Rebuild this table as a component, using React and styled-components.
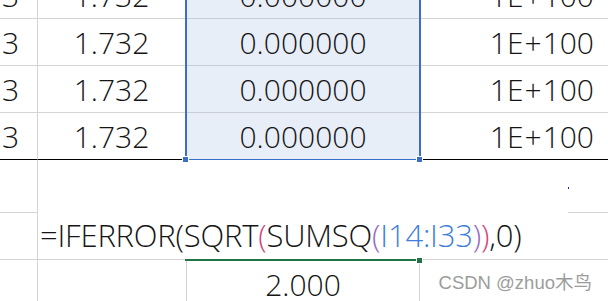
import React from 'react'
import styled, { createGlobalStyle } from 'styled-components'

const GRID = '#d4d4d4'
const SEL_GRID = '#c8ccd4'
const SEL_BLUE = '#3b6fc7'
const SEL_FILL = '#e8eef8'
const EXCEL_GREEN = '#217346'
const INK = '#151515'

const GlobalStyle = createGlobalStyle`
  html, body {
    margin: 0;
    padding: 0;
    background: #fff;
  }
  body {
    font-family: 'Open Sans', 'Noto Sans', sans-serif;
    font-weight: 300;
  }
`

const Sheet = styled.div`
  position: relative;
  width: 608px;
  height: 301px;
  overflow: hidden;
  background: #fff;
  color: ${INK};
`

const DataBlock = styled.div`
  display: grid;
  grid-template-columns: 38px 147px 236px 1fr;
  grid-template-rows: 19px 47px 47px 47px;
`

const justify = { left: 'flex-start', center: 'center', right: 'flex-end' }

const Cell = styled.div`
  box-sizing: border-box;
  display: flex;
  align-items: flex-end;
  justify-content: ${p => justify[p.$align || 'center']};
  overflow: hidden;
  padding: 0 ${p => p.$padRight || 0}px 7px ${p => p.$padLeft || 0}px;
  font-size: 30px;
  line-height: 30px;
  white-space: nowrap;
  border-bottom: 1px solid ${p => (p.$closing ? '#000' : GRID)};
  border-right: ${p => (p.$ruled ? `1px solid ${GRID}` : 'none')};
`

const Selection = styled.div`
  grid-column: 3;
  grid-row: 1 / span 4;
  position: relative;
  display: grid;
  grid-template-rows: 19px 47px 47px 46px;
  background: ${SEL_FILL};
  border-left: 2px solid ${SEL_BLUE};
  border-right: 2px solid ${SEL_BLUE};
  border-bottom: 1px solid ${SEL_BLUE};
`

const SelCell = styled(Cell)`
  border-bottom: ${p => (p.$closing ? 'none' : `1px solid ${SEL_GRID}`)};
`

const Handle = styled.span`
  position: absolute;
  bottom: -3px;
  ${p => (p.$side === 'left' ? 'left: -4px;' : 'right: -3px;')}
  width: 5px;
  height: 5px;
  background: ${SEL_BLUE};
  box-shadow: 0 0 0 1px #fff;
`

const LowerBlock = styled.div`
  display: grid;
  grid-template-columns: 38px 149px 233px 148px 1fr;
  grid-template-rows: 53px 47px 47px;
`

const GridCell = styled.div`
  box-sizing: border-box;
  border-right: ${p => (p.$right ? `1px solid ${GRID}` : 'none')};
  border-bottom: ${p => (p.$bottom ? `1px solid ${GRID}` : 'none')};
  grid-column: ${p => (p.$span ? `span ${p.$span}` : 'auto')};
`

const Speck = styled.span`
  display: block;
  width: 1px;
  height: 2px;
  margin-top: 27px;
  background: #1b2c86;
`

const FormulaCell = styled(GridCell)`
  display: flex;
  align-items: flex-end;
  padding: 0 0 8px 2px;
  font-size: 31px;
  line-height: 31px;
  letter-spacing: -0.2px;
  white-space: nowrap;
`

const Tok = styled.span`
  color: ${p => p.$tone || INK};
`

const ActiveCell = styled(GridCell)`
  position: relative;
  display: flex;
  align-items: flex-end;
  justify-content: center;
  padding-bottom: 7px;
  font-size: 30px;
  line-height: 30px;

  &::before {
    content: '';
    position: absolute;
    top: -1px;
    left: -2px;
    right: 2px;
    height: 2px;
    background: ${EXCEL_GREEN};
  }

  &::after {
    content: '';
    position: absolute;
    top: -2px;
    right: -3px;
    width: 5px;
    height: 5px;
    background: ${EXCEL_GREEN};
    box-shadow: 0 0 0 1px #fff;
  }
`

const Plus = styled.span`
  margin: 0 1px;
`

const Watermark = styled.div`
  position: absolute;
  right: 16px;
  bottom: 9px;
  font-family: 'Liberation Sans', 'Noto Sans CJK SC', sans-serif;
  font-weight: 400;
  font-size: 18.5px;
  line-height: 18px;
  color: #9c9c9c;
  text-shadow: 0 0 1px #fff;
  white-space: nowrap;
`

const rows = ['1.732', '1.732', '1.732', '1.732']

const PINK = '#d2447e'
const PURPLE = '#9569c8'
const BLUE = '#3f7fda'

const App = () => (
  <>
    <GlobalStyle />
    <Sheet>
      <DataBlock>
        <Selection>
          {rows.map((_, i) => (
            <SelCell key={i} $closing={i === rows.length - 1}>
              0.000000
            </SelCell>
          ))}
          <Handle $side="left" />
          <Handle $side="right" />
        </Selection>
        {rows.map((value, i) => {
          const closing = i === rows.length - 1
          return (
            <React.Fragment key={i}>
              <Cell $align="right" $padRight={18} $ruled $closing={closing}>
                3
              </Cell>
              <Cell $closing={closing}>{value}</Cell>
              <Cell $align="right" $padRight={14} $closing={closing}>
                1E<Plus>+</Plus>100
              </Cell>
            </React.Fragment>
          )
        })}
      </DataBlock>

      <LowerBlock>
        <GridCell $right $bottom />
        <GridCell $span={3} />
        <GridCell $bottom>
          <Speck />
        </GridCell>

        <GridCell $right $bottom />
        <FormulaCell $span={4} $bottom>
          <Tok>=IFERROR(SQRT</Tok>
          <Tok $tone={PINK}>(</Tok>
          <Tok>SUMSQ</Tok>
          <Tok $tone={PURPLE}>(</Tok>
          <Tok $tone={BLUE}>I14:I33</Tok>
          <Tok $tone={PURPLE}>)</Tok>
          <Tok $tone={PINK}>)</Tok>
          <Tok>,0)</Tok>
        </FormulaCell>

        <GridCell $right />
        <GridCell $right />
        <ActiveCell $right>2.000</ActiveCell>
        <GridCell $span={2} />
      </LowerBlock>

      <Watermark>CSDN @zhuo木鸟</Watermark>
    </Sheet>
  </>
)

export default App
